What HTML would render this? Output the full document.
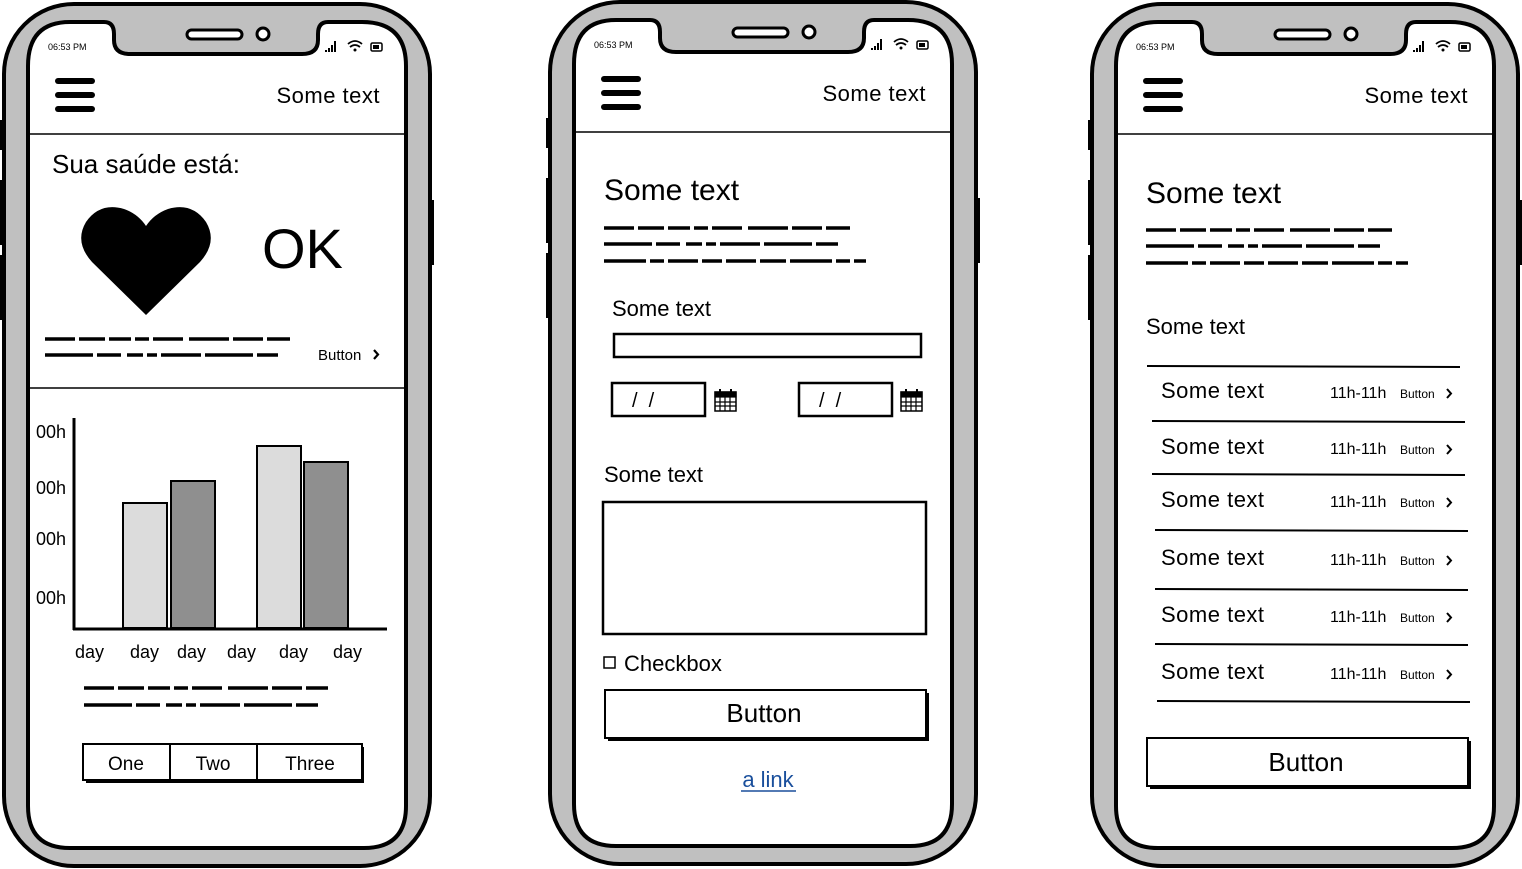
<!DOCTYPE html>
<html><head><meta charset="utf-8"><style>
html,body{margin:0;padding:0;background:#fff;}
svg{display:block}
text{font-family:"Liberation Sans",sans-serif;fill:#000}
</style></head><body>
<svg width="1522" height="869" viewBox="0 0 1522 869" xmlns="http://www.w3.org/2000/svg">
<defs>
<g id="frame">
  <rect x="4" y="4" width="426" height="862" rx="70" fill="#c0c0c0" stroke="#000" stroke-width="4"/>
  <rect x="0" y="120" width="6" height="30" fill="#000"/>
  <rect x="0" y="180" width="6" height="65" fill="#000"/>
  <rect x="0" y="255" width="6" height="65" fill="#000"/>
  <rect x="428" y="200" width="6" height="65" fill="#000"/>
  <path d="M70 22 H104 Q114 22 114 34 V40 Q114 54 130 54 H302 Q318 54 318 40 V34 Q318 22 328 22 H362 Q406 22 406 66 V806 Q406 848 364 848 H70 Q28 848 28 806 V66 Q28 22 70 22 Z" fill="#fff" stroke="#000" stroke-width="4"/>
  <rect x="187" y="30" width="55" height="9" rx="4.5" fill="#fff" stroke="#000" stroke-width="3"/>
  <circle cx="263" cy="34" r="6" fill="#fff" stroke="#000" stroke-width="3"/>
  <text x="48" y="50" font-size="9">06:53 PM</text>
  <g fill="#000"><rect x="325" y="50" width="2" height="2"/><rect x="328" y="48" width="2" height="4"/><rect x="331" y="45" width="2" height="7"/><rect x="334" y="41" width="2" height="11"/></g>
  <path d="M348 44 Q355 38 362 44 M350 47 Q355 43 360 47" stroke="#000" stroke-width="1.8" fill="none"/><circle cx="355" cy="50" r="1.5"/>
  <rect x="371" y="43" width="11" height="8" rx="1.5" fill="none" stroke="#000" stroke-width="1.5"/><rect x="373" y="45" width="6" height="4"/>
  <rect x="55" y="78" width="40" height="6" rx="3"/><rect x="55" y="92" width="40" height="6" rx="3"/><rect x="55" y="106" width="40" height="6" rx="3"/>
  <text x="380" y="103" font-size="22" text-anchor="end" letter-spacing="0.5">Some text</text>
  <line x1="28" y1="134" x2="406" y2="134" stroke="#000" stroke-width="1.5"/>
</g>
</defs>

<!-- PHONE 1 -->
<use href="#frame"/>
<text x="52" y="173" font-size="26">Sua saúde está:</text>
<path d="M146 315 L92 262 Q74 242 86 222 Q100 202 124 209 Q138 214 146 226 Q154 214 168 209 Q192 202 206 222 Q218 242 200 262 Z" fill="#000"/>
<text x="262" y="268" font-size="56">OK</text>
<g stroke="#000" stroke-width="3.5" fill="none">
<line x1="45" y1="339" x2="290" y2="339" stroke-dasharray="30 4 26 4 22 4 14 4 30 6 40 4"/>
<line x1="45" y1="355" x2="278" y2="355" stroke-dasharray="48 4 24 6 16 4 10 4 40 4"/>
</g>
<text x="318" y="360" font-size="15">Button</text>
<path d="M374 350 L378 354.5 L374 359" stroke="#000" stroke-width="2.2" fill="none"/>
<line x1="28" y1="388" x2="406" y2="388" stroke="#000" stroke-width="1.5"/>
<g font-size="18"><text x="36" y="438">00h</text><text x="36" y="494">00h</text><text x="36" y="545">00h</text><text x="36" y="604">00h</text></g>
<rect x="123" y="503" width="44" height="125" fill="#dcdcdc" stroke="#000" stroke-width="2"/>
<rect x="171" y="481" width="44" height="147" fill="#8f8f8f" stroke="#000" stroke-width="2"/>
<rect x="257" y="446" width="44" height="182" fill="#dcdcdc" stroke="#000" stroke-width="2"/>
<rect x="304" y="462" width="44" height="166" fill="#8f8f8f" stroke="#000" stroke-width="2"/>
<line x1="74" y1="418" x2="74" y2="630" stroke="#000" stroke-width="3"/>
<line x1="73" y1="629" x2="387" y2="629" stroke="#000" stroke-width="3"/>
<g font-size="18"><text x="75" y="658">day</text><text x="130" y="658">day</text><text x="177" y="658">day</text><text x="227" y="658">day</text><text x="279" y="658">day</text><text x="333" y="658">day</text></g>
<g stroke="#000" stroke-width="3.5" fill="none">
<line x1="84" y1="688" x2="328" y2="688" stroke-dasharray="30 4 26 4 22 4 14 4 30 6 40 4"/>
<line x1="84" y1="705" x2="318" y2="705" stroke-dasharray="48 4 24 6 16 4 10 4 40 4"/>
</g>
<rect x="86" y="747" width="278" height="36" fill="#000"/>
<rect x="83" y="744" width="279" height="36" fill="#fff" stroke="#000" stroke-width="2"/>
<line x1="170" y1="744" x2="170" y2="780" stroke="#000" stroke-width="2"/>
<line x1="257" y1="744" x2="257" y2="780" stroke="#000" stroke-width="2"/>
<g font-size="19" text-anchor="middle"><text x="126" y="770">One</text><text x="213" y="770">Two</text><text x="310" y="770">Three</text></g>

<!-- PHONE 2 -->
<g transform="translate(546,-2)"><use href="#frame"/></g>
<text x="604" y="200" font-size="30">Some text</text>
<g stroke="#000" stroke-width="3.5" fill="none">
<line x1="604" y1="228" x2="850" y2="228" stroke-dasharray="30 4 26 4 22 4 14 4 30 6 40 4"/>
<line x1="604" y1="244" x2="838" y2="244" stroke-dasharray="48 4 24 6 16 4 10 4 40 4"/>
<line x1="604" y1="261" x2="866" y2="261" stroke-dasharray="42 4 14 4 30 4 20 4 30 4 26 4"/>
</g>
<text x="612" y="316" font-size="22">Some text</text>
<rect x="614" y="334" width="307" height="23" fill="none" stroke="#000" stroke-width="2.5"/>
<rect x="612" y="383" width="93" height="33" fill="none" stroke="#000" stroke-width="2.5"/>
<rect x="799" y="383" width="93" height="33" fill="none" stroke="#000" stroke-width="2.5"/>
<g font-size="20"><text x="632" y="407">/&#160;&#160;/</text><text x="819" y="407">/&#160;&#160;/</text></g>
<g id="cal" stroke="#000" fill="none" stroke-width="1.2">
<rect x="715" y="392" width="21" height="19" fill="#fff" stroke-width="1.5"/>
<rect x="715" y="392" width="21" height="5" fill="#000"/>
<line x1="720" y1="389" x2="720" y2="395" stroke-width="2"/><line x1="731" y1="389" x2="731" y2="395" stroke-width="2"/>
<line x1="720" y1="397" x2="720" y2="411"/><line x1="725" y1="397" x2="725" y2="411"/><line x1="730" y1="397" x2="730" y2="411"/>
<line x1="715" y1="402" x2="736" y2="402"/><line x1="715" y1="406" x2="736" y2="406"/>
</g>
<use href="#cal" transform="translate(186,0)"/>
<text x="604" y="482" font-size="22">Some text</text>
<rect x="603" y="502" width="323" height="132" fill="none" stroke="#000" stroke-width="2.5"/>
<rect x="604" y="657" width="11" height="11" fill="none" stroke="#000" stroke-width="1.5"/>
<text x="624" y="671" font-size="22">Checkbox</text>
<rect x="608" y="693" width="321" height="48" fill="#000"/>
<rect x="605" y="690" width="321" height="48" fill="#fff" stroke="#000" stroke-width="2"/>
<text x="764" y="722" font-size="26" text-anchor="middle">Button</text>
<text x="768" y="787" font-size="22" text-anchor="middle" style="fill:#1a4f9c">a link</text>
<line x1="741" y1="791" x2="796" y2="791" stroke="#1a4f9c" stroke-width="1.5"/>

<!-- PHONE 3 -->
<g transform="translate(1088,0)"><use href="#frame"/></g>
<text x="1146" y="203" font-size="30">Some text</text>
<g stroke="#000" stroke-width="3.5" fill="none">
<line x1="1146" y1="230" x2="1392" y2="230" stroke-dasharray="30 4 26 4 22 4 14 4 30 6 40 4"/>
<line x1="1146" y1="246" x2="1380" y2="246" stroke-dasharray="48 4 24 6 16 4 10 4 40 4"/>
<line x1="1146" y1="263" x2="1408" y2="263" stroke-dasharray="42 4 14 4 30 4 20 4 30 4 26 4"/>
</g>
<text x="1146" y="334" font-size="22">Some text</text>
<g stroke="#000" stroke-width="2">
<line x1="1147" y1="366" x2="1460" y2="367"/>
<line x1="1152" y1="421" x2="1465" y2="422"/>
<line x1="1152" y1="474" x2="1465" y2="475"/>
<line x1="1155" y1="530" x2="1468" y2="531"/>
<line x1="1155" y1="589" x2="1468" y2="590"/>
<line x1="1155" y1="644" x2="1468" y2="645"/>
<line x1="1157" y1="701" x2="1470" y2="702"/>
</g>
<g id="row">
<text x="1161" y="398" font-size="22" letter-spacing="0.5">Some text</text>
<text x="1330" y="398" font-size="16">11h-11h</text>
<text x="1400" y="398" font-size="12">Button</text>
<path d="M1447 389 L1451 393.5 L1447 398" stroke="#000" stroke-width="2" fill="none"/>
</g>
<use href="#row" transform="translate(0,56)"/>
<use href="#row" transform="translate(0,109)"/>
<use href="#row" transform="translate(0,167)"/>
<use href="#row" transform="translate(0,224)"/>
<use href="#row" transform="translate(0,281)"/>
<rect x="1150" y="741" width="321" height="48" fill="#000"/>
<rect x="1147" y="738" width="321" height="48" fill="#fff" stroke="#000" stroke-width="2"/>
<text x="1306" y="771" font-size="26" text-anchor="middle">Button</text>
</svg>
</body></html>
